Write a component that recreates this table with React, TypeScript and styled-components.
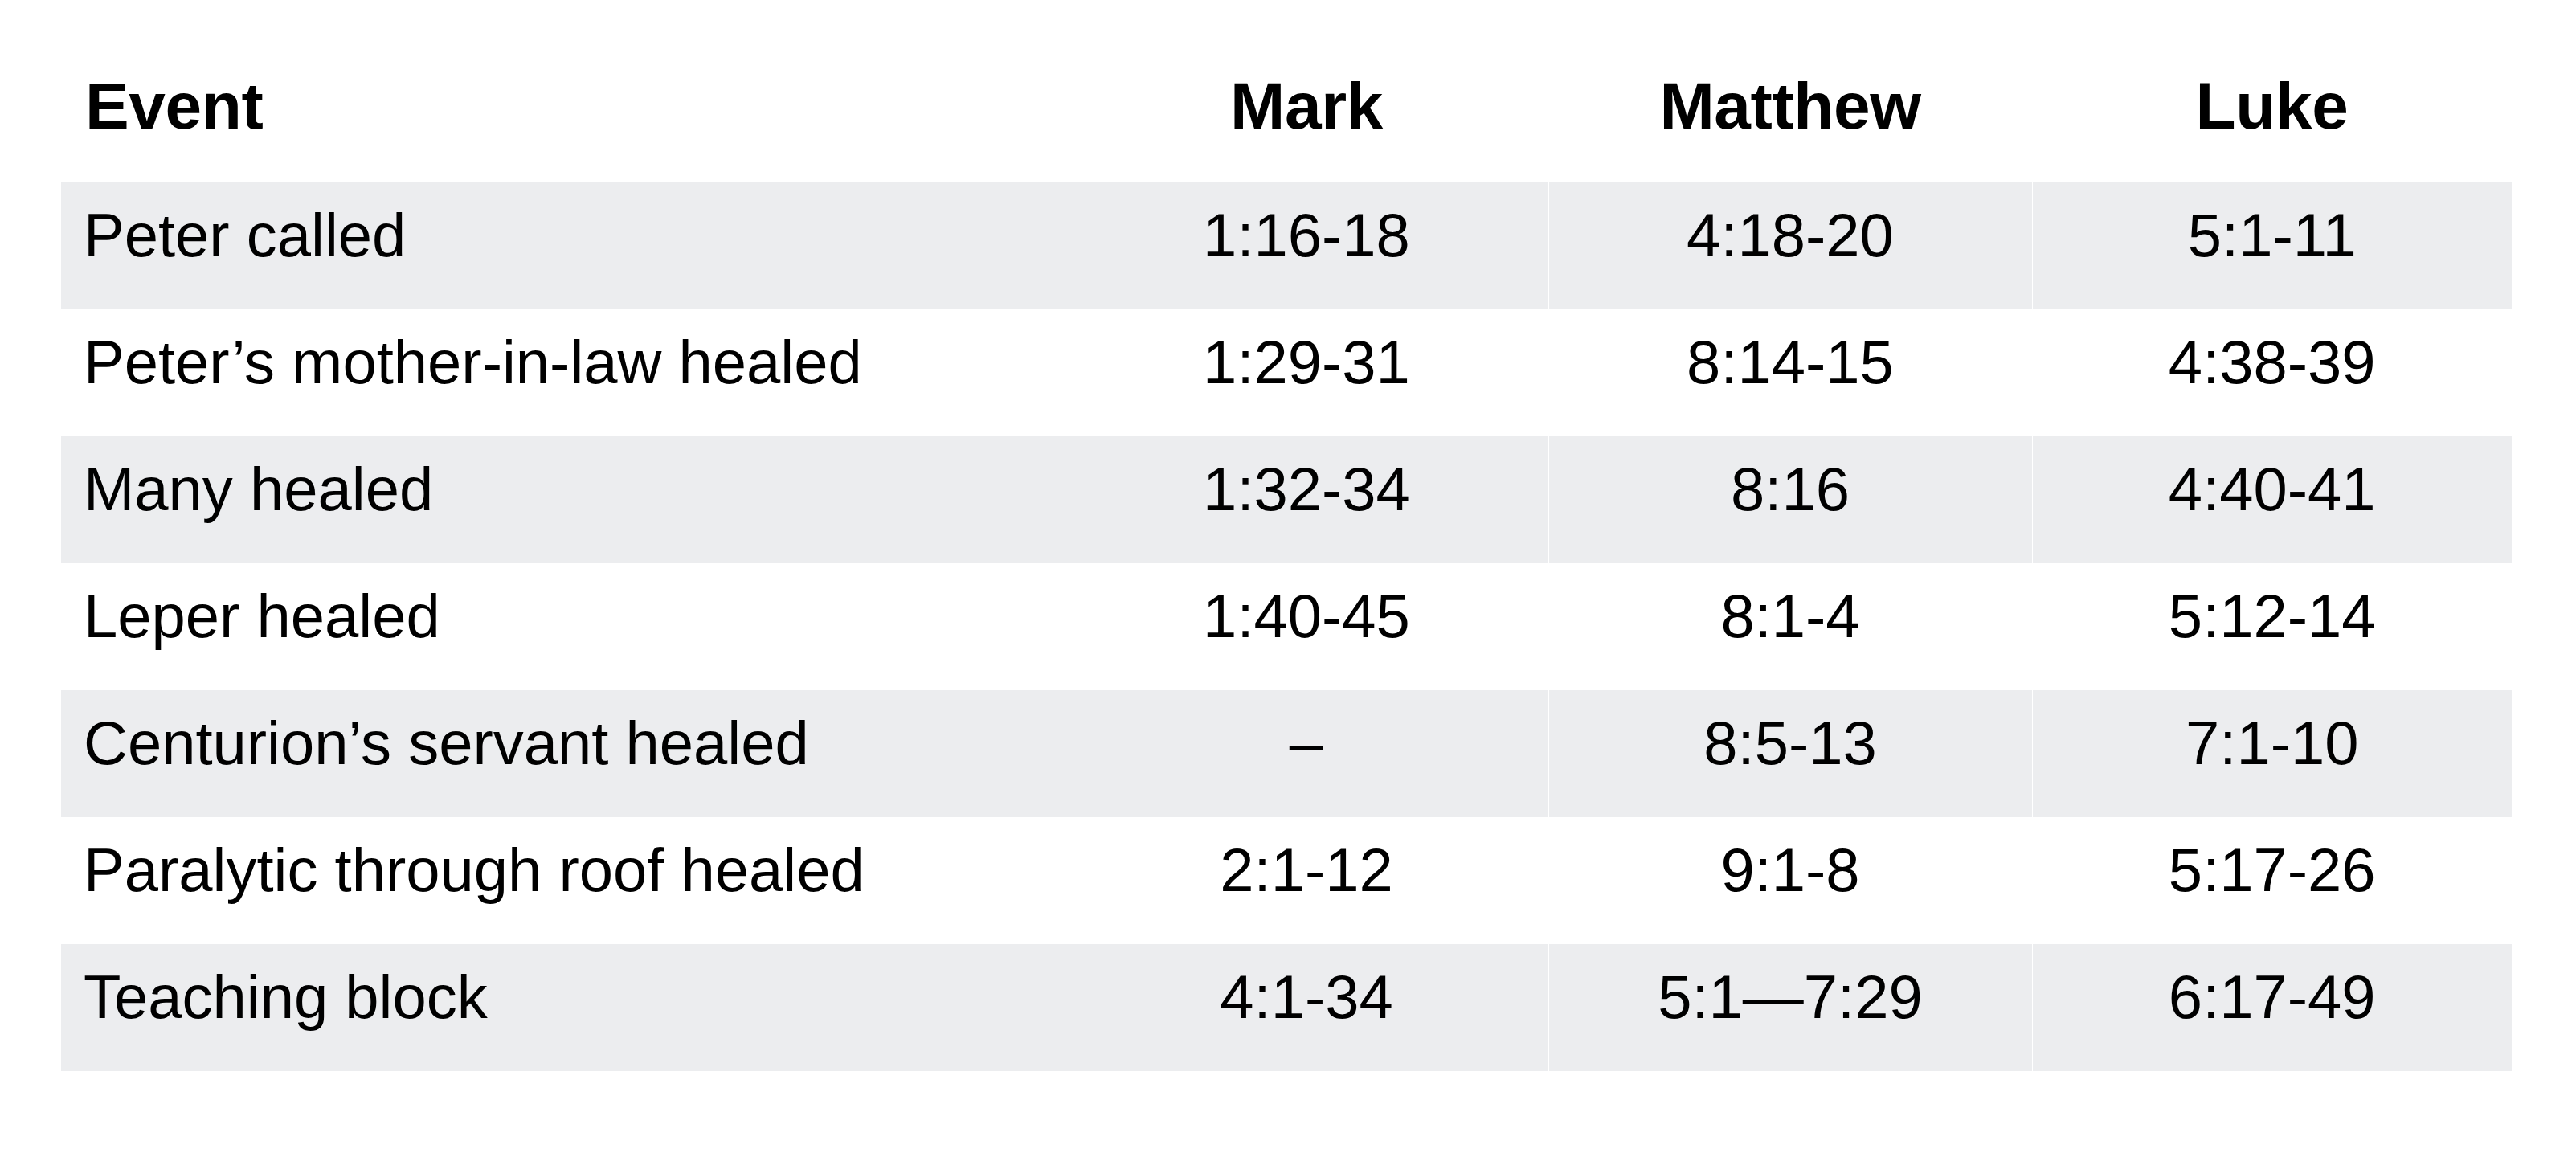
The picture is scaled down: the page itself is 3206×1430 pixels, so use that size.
import React from "react";
import styled, { createGlobalStyle } from "styled-components";

const Global = createGlobalStyle`
  html, body { margin: 0; padding: 0; background: #ffffff; }
  body { font-family: "Liberation Sans", Arial, Helvetica, sans-serif; color: #000; }
`;

const Page = styled.div`
  width: 3206px;
  height: 1430px;
  padding: 0 80px 0 76px;
  box-sizing: border-box;
`;

const Table = styled.table`
  width: 3050px;
  border-collapse: collapse;
  table-layout: fixed;
`;

const HeadCell = styled.th<{ $align?: "left" | "center" }>`
  height: 227px;
  box-sizing: border-box;
  padding: 91px 0 55px ${(p) => (p.$align === "left" ? "30px" : "0")};
  font-size: 82px;
  line-height: 81px;
  font-weight: 700;
  text-align: ${(p) => p.$align ?? "center"};
  vertical-align: top;
  color: #000;
  letter-spacing: -0.4px;
`;

const Row = styled.tr<{ $shaded: boolean }>`
  background: ${(p) => (p.$shaded ? "#ecedef" : "#ffffff")};
`;

const Cell = styled.td<{ $align?: "left" | "center"; $shaded: boolean }>`
  height: 158px;
  box-sizing: border-box;
  padding: 27px 0 54px ${(p) => (p.$align === "left" ? "28px" : "0")};
  font-size: 76px;
  line-height: 77px;
  text-align: ${(p) => p.$align ?? "center"};
  vertical-align: top;
  white-space: nowrap;
  color: #000;
  & + & {
    border-left: 1px solid ${(p) => (p.$shaded ? "#edeef0" : "#ffffff")};
  }
`;

const rows: [string, string, string, string][] = [
  ["Peter called", "1:16-18", "4:18-20", "5:1-11"],
  ["Peter\u2019s mother-in-law healed", "1:29-31", "8:14-15", "4:38-39"],
  ["Many healed", "1:32-34", "8:16", "4:40-41"],
  ["Leper healed", "1:40-45", "8:1-4", "5:12-14"],
  ["Centurion\u2019s servant healed", "\u2013", "8:5-13", "7:1-10"],
  ["Paralytic through roof healed", "2:1-12", "9:1-8", "5:17-26"],
  ["Teaching block", "4:1-34", "5:1\u20147:29", "6:17-49"],
];

export default function App() {
  return (
    <Page>
      <Global />
      <Table>
        <colgroup>
          <col style={{ width: 1249 }} />
          <col style={{ width: 602 }} />
          <col style={{ width: 602 }} />
          <col style={{ width: 597 }} />
        </colgroup>
        <thead>
          <tr>
            <HeadCell $align="left">Event</HeadCell>
            <HeadCell>Mark</HeadCell>
            <HeadCell>Matthew</HeadCell>
            <HeadCell>Luke</HeadCell>
          </tr>
        </thead>
        <tbody>
          {rows.map((r, i) => {
            const shaded = i % 2 === 0;
            return (
              <Row key={r[0]} $shaded={shaded}>
                <Cell $align="left" $shaded={shaded}>{r[0]}</Cell>
                <Cell $shaded={shaded}>{r[1]}</Cell>
                <Cell $shaded={shaded}>{r[2]}</Cell>
                <Cell $shaded={shaded}>{r[3]}</Cell>
              </Row>
            );
          })}
        </tbody>
      </Table>
    </Page>
  );
}
